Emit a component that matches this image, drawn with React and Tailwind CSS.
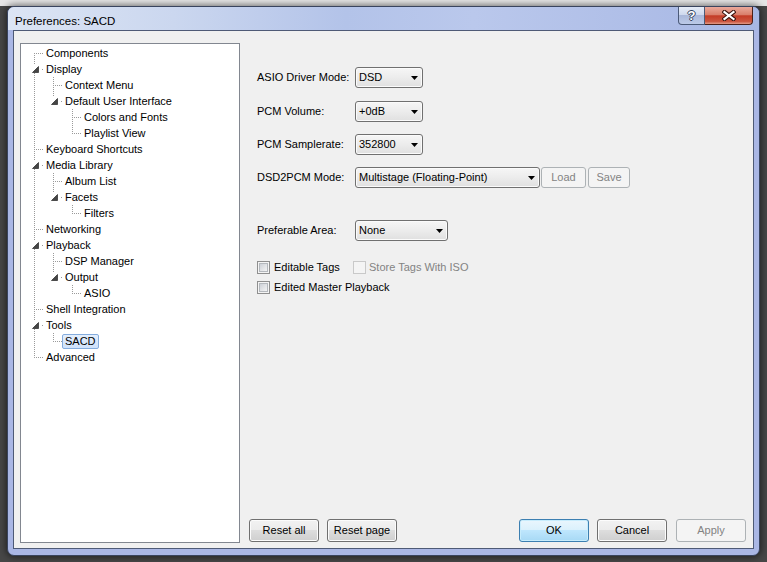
import React from "react";

const TREE = [
  { label: "Components" },
  {
    label: "Display",
    children: [
      { label: "Context Menu" },
      {
        label: "Default User Interface",
        children: [{ label: "Colors and Fonts" }, { label: "Playlist View" }],
      },
    ],
  },
  { label: "Keyboard Shortcuts" },
  {
    label: "Media Library",
    children: [
      { label: "Album List" },
      { label: "Facets", children: [{ label: "Filters" }] },
    ],
  },
  { label: "Networking" },
  {
    label: "Playback",
    children: [
      { label: "DSP Manager" },
      { label: "Output", children: [{ label: "ASIO" }] },
    ],
  },
  { label: "Shell Integration" },
  { label: "Tools", children: [{ label: "SACD", selected: true }] },
  { label: "Advanced" },
];

function flatten(nodes, depth = 0, rails = [], out = []) {
  nodes.forEach((n, i) => {
    const last = i === nodes.length - 1;
    const first = depth === 0 && i === 0;
    out.push({ ...n, depth, rails, last, first, open: !!n.children });
    if (n.children) flatten(n.children, depth + 1, [...rails, !last], out);
  });
  return out;
}

const LINE = "#9a9a9a";

function Rail({ on }) {
  return (
    <svg width="19" height="16" className="shrink-0">
      {on && (
        <line x1="9.5" y1="0" x2="9.5" y2="16" stroke={LINE} strokeDasharray="1 1" />
      )}
    </svg>
  );
}

function Joint({ first, last, open }) {
  if (open) {
    return (
      <svg width="19" height="16" className="shrink-0">
        {!first && (
          <line x1="9.5" y1="0" x2="9.5" y2="4" stroke={LINE} strokeDasharray="1 1" />
        )}
        {!last && (
          <line x1="9.5" y1="12" x2="9.5" y2="16" stroke={LINE} strokeDasharray="1 1" />
        )}
        <rect x="17" y="8" width="1" height="1" fill={LINE} />
        <path d="M13.5 5.5V11.5H7.5Z" fill="#454545" stroke="#262626" strokeWidth="0.7" />
      </svg>
    );
  }
  return (
    <svg width="19" height="16" className="shrink-0">
      <line
        x1="9.5"
        y1={first ? 8 : 0}
        x2="9.5"
        y2={last ? 9 : 16}
        stroke={LINE}
        strokeDasharray="1 1"
      />
      <line x1="11" y1="8.5" x2="19" y2="8.5" stroke={LINE} strokeDasharray="1 1" />
    </svg>
  );
}

function Tree() {
  const rows = flatten(TREE);
  return (
    <div className="ml-[6px] mt-[12px] h-[500px] w-[220px] shrink-0 border border-[#828790] bg-white pl-[4px] pt-[1px]">
      {rows.map((r) => (
        <div key={r.label} className="flex h-[16px] items-center">
          {r.rails.map((on, i) => (
            <Rail key={i} on={on} />
          ))}
          <Joint first={r.first} last={r.last} open={r.open} />
          <span
            className={`ml-[-1px] flex h-[15px] items-center whitespace-nowrap rounded-[2px] border pl-[2px] pr-[2px] leading-[13px] ${
              r.selected
                ? "border-[#84acdd] bg-[linear-gradient(#e4effd,#cfe2fb)]"
                : "border-transparent"
            }`}
          >
            {r.label}
          </span>
        </div>
      ))}
    </div>
  );
}

function Select({ children, w }) {
  return (
    <div
      className={`flex h-[21px] shrink-0 items-center justify-between rounded-[3px] border border-[#707070] bg-[linear-gradient(#f6f6f6_0%,#ececec_50%,#e0e0e0_100%)] pl-[3px] pr-[4px] shadow-[inset_0_0_0_1px_#fbfbfb] ${w}`}
    >
      <span className="whitespace-nowrap">{children}</span>
      <svg width="7" height="4" className="shrink-0">
        <path d="M0 0H7L3.5 4Z" fill="#000" />
      </svg>
    </div>
  );
}

function Btn({ children, kind = "normal", className = "" }) {
  const look = {
    normal:
      "border-[#707070] bg-[linear-gradient(#f2f2f2_0%,#ebebeb_50%,#dddddd_50%,#cfcfcf_100%)] text-black shadow-[inset_0_0_0_1px_#fcfcfc]",
    default:
      "border-[#3c7fb1] bg-[linear-gradient(#eaf6fd_0%,#d9f0fc_50%,#bee6fd_50%,#a7d9f5_100%)] text-black shadow-[inset_0_0_0_1px_#c7ecfc]",
    disabled: "border-[#adb2b5] bg-[#f4f4f4] text-[#838383]",
  }[kind];
  return (
    <div
      className={`flex shrink-0 items-center justify-center rounded-[3px] border ${look} ${className}`}
    >
      {children}
    </div>
  );
}

function Check({ disabled }) {
  if (disabled) {
    return <span className="h-[13px] w-[13px] shrink-0 border border-[#c9c9c9] bg-[#f4f4f4]" />;
  }
  return (
    <span className="flex h-[13px] w-[13px] shrink-0 items-center justify-center border border-[#8f8f8f] bg-[#f4f4f4]">
      <span className="h-[9px] w-[9px] border border-[#b4b8bd] bg-[linear-gradient(135deg,#cdd1d7,#f4f4f4)]" />
    </span>
  );
}

function CaptionButtons() {
  return (
    <div className="mr-[6px] flex h-[18px]">
      <div className="flex w-[27px] items-center justify-center rounded-bl-[4px] border border-t-0 border-[#4b5a78] bg-[linear-gradient(#e6ecf7_0%,#cfd9ee_45%,#aab8da_50%,#bccae8_100%)] text-[13px] font-bold leading-none text-white [text-shadow:1px_0_#34445f,-1px_0_#34445f,0_1px_#34445f,0_-1px_#34445f]">
        ?
      </div>
      <div className="flex w-[48px] items-center justify-center rounded-br-[4px] border border-l-0 border-t-0 border-[#4b2019] bg-[linear-gradient(#eaa99b_0%,#d9806c_45%,#c43c27_52%,#cc5640_85%,#e39b87_100%)]">
        <svg width="14" height="11">
          <path d="M2.5 2L11.5 9M11.5 2L2.5 9" stroke="#3d1510" strokeWidth="4.2" strokeLinecap="square" />
          <path d="M2.5 2L11.5 9M11.5 2L2.5 9" stroke="#fff" strokeWidth="2.2" strokeLinecap="square" />
        </svg>
      </div>
    </div>
  );
}

export default function App() {
  return (
    <div className="h-[562px] w-[767px] overflow-hidden bg-[linear-gradient(#e6e6e6_0,#e6e6e6_6px,#474747_6px)] pl-[7px] pt-[6px] font-['Liberation_Sans',Arial,sans-serif] text-[11px] text-black">
      <div className="flex h-[550px] w-[753px] flex-col rounded-[7px] border border-[#39445e] bg-[#aab7e5] shadow-[0_0_7px_1px_rgba(0,0,0,0.55)]">
        <div className="flex h-[23px] shrink-0 rounded-t-[6px] bg-[linear-gradient(90deg,#dce5f4_0%,#cbd7ef_22%,#b3c3e9_45%,#bac8ec_62%,#a7b7e4_100%)]">
          <div className="flex-1 pl-[7px] pt-[7px] text-[11.5px] leading-[14px]">
            Preferences: SACD
          </div>
          <CaptionButtons />
        </div>

        <div className="mx-[5px] flex h-[519px] shrink-0 border border-[#4e5a76] bg-[#f0f0f0]">
          <Tree />

          <div className="flex flex-1 flex-col">
            <div className="flex flex-col pl-[17px] pt-[36px]">
              <div className="flex h-[21px] items-center">
                <span className="w-[98px] shrink-0">ASIO Driver Mode:</span>
                <Select w="w-[68px]">DSD</Select>
              </div>
              <div className="mt-[13px] flex h-[21px] items-center">
                <span className="w-[98px] shrink-0">PCM Volume:</span>
                <Select w="w-[68px]">+0dB</Select>
              </div>
              <div className="mt-[12px] flex h-[21px] items-center">
                <span className="w-[98px] shrink-0">PCM Samplerate:</span>
                <Select w="w-[68px]">352800</Select>
              </div>
              <div className="mt-[12px] flex h-[21px] items-center">
                <span className="w-[98px] shrink-0">DSD2PCM Mode:</span>
                <Select w="w-[185px]">Multistage (Floating-Point)</Select>
                <Btn kind="disabled" className="ml-[1px] h-[21px] w-[45px]">
                  Load
                </Btn>
                <Btn kind="disabled" className="ml-[2px] h-[21px] w-[42px]">
                  Save
                </Btn>
              </div>
              <div className="mt-[32px] flex h-[21px] items-center">
                <span className="w-[98px] shrink-0">Preferable Area:</span>
                <Select w="w-[93px]">None</Select>
              </div>
              <div className="mt-[16px] flex h-[20px] items-center">
                <label className="flex w-[96px] items-center gap-[4px]">
                  <Check />
                  <span>Editable Tags</span>
                </label>
                <label className="flex items-center gap-[3px] text-[#838383]">
                  <Check disabled />
                  <span>Store Tags With ISO</span>
                </label>
              </div>
              <div className="flex h-[20px] items-center">
                <label className="flex items-center gap-[4px]">
                  <Check />
                  <span>Edited Master Playback</span>
                </label>
              </div>
            </div>

            <div className="mt-auto flex h-[29px] items-start justify-between pl-[9px] pr-[7px]">
              <div className="flex gap-[8px]">
                <Btn className="h-[23px] w-[70px]">Reset all</Btn>
                <Btn className="h-[23px] w-[70px]">Reset page</Btn>
              </div>
              <div className="flex gap-[8px]">
                <Btn kind="default" className="h-[23px] w-[70px]">
                  OK
                </Btn>
                <Btn className="h-[23px] w-[70px]">Cancel</Btn>
                <Btn kind="disabled" className="ml-[1px] h-[23px] w-[70px]">
                  Apply
                </Btn>
              </div>
            </div>
          </div>
        </div>
      </div>
    </div>
  );
}
